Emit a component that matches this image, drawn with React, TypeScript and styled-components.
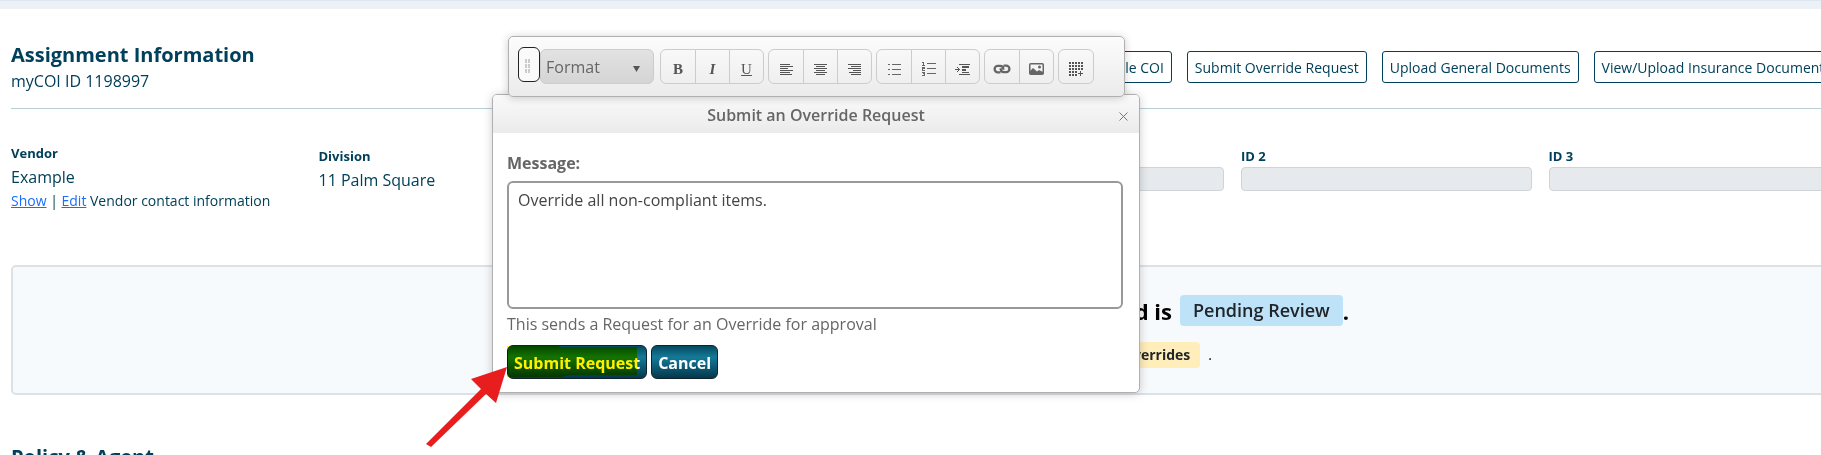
import React from "react";
import styled, { createGlobalStyle, css } from "styled-components";

const Global = createGlobalStyle`
  *, *::before, *::after { box-sizing: border-box; }
  body {
    margin: 0;
    background: #fff;
    color: #00405a;
    font: 16px/24px "Open Sans", "Noto Sans", sans-serif;
    overflow: hidden;
  }
  h1, h2, p { margin: 0; }
  button, textarea, select, input { font-family: inherit; }
`;

const Page = styled.div`
  position: relative;
  min-height: 100vh;
  overflow: hidden;
`;

const TopStrip = styled.div`
  height: 9px;
  background: #ebf1f7;
  border-top: 1px solid #dee6ef;
`;

const Main = styled.main`
  margin: 0 -18px 0 11px;
`;

const PageHeader = styled.header`
  display: flex;
  justify-content: space-between;
  align-items: flex-start;
  padding: 32px 0 15px;
  border-bottom: 1px solid #b9cfd4;
`;

const Title = styled.h1`
  font-size: 20px;
  line-height: 28px;
  font-weight: 700;
`;

const Subtitle = styled.p`
  font-size: 16px;
  line-height: 24px;
  font-weight: 500;
`;

const Actions = styled.div`
  display: flex;
  gap: 15px;
  padding-top: 10px;
`;

const ActionButton = styled.button`
  height: 32px;
  padding: 0 7px;
  border: 1px solid #00405a;
  border-radius: 3px;
  background: #fff;
  color: #00405a;
  font-size: 14px;
  white-space: nowrap;
`;

const Details = styled.section`
  display: grid;
  grid-template-columns: repeat(6, 1fr);
  gap: 17px;
  height: 156px;
  padding-top: 34px;
`;

const Field = styled.div<{ $lowered?: boolean }>`
  display: flex;
  flex-direction: column;
  padding-top: ${(p) => (p.$lowered ? 3 : 0)}px;
`;

const fieldLabel = css`
  font-size: 13px;
  line-height: 21px;
  font-weight: 700;
`;

const FieldName = styled.div`${fieldLabel}`;
const FieldLabel = styled.label`${fieldLabel}`;

const FieldValue = styled.div`
  font-size: 16px;
  line-height: 26px;
`;

const ContactLine = styled.div`
  font-size: 14px;
  line-height: 21px;
  a { color: #1a6dff; }
`;

const IdInput = styled.input`
  width: 100%;
  height: 24px;
  border: 1px solid #ced4da;
  border-radius: 4px;
  background: #e6eaed;
`;

const StatusPanel = styled.section`
  display: flex;
  flex-direction: column;
  align-items: center;
  gap: 16px;
  height: 130px;
  padding-top: 28px;
  border: 2px solid #dce1e5;
  border-radius: 5px;
  background: #f6fafd;
  color: #000;
`;

const StatusLine = styled.div<{ $width: number; $large?: boolean }>`
  display: flex;
  justify-content: flex-end;
  align-items: center;
  gap: 8px;
  width: ${(p) => p.$width}px;
  font-size: ${(p) => (p.$large ? 22 : 14)}px;
  font-weight: ${(p) => (p.$large ? 700 : 400)};
  white-space: nowrap;
`;

const Badge = styled.span<{ $tone: "blue" | "yellow" }>`
  padding: ${(p) => (p.$tone === "blue" ? "0 13px" : "0 10px")};
  border-radius: 4px;
  background: ${(p) => (p.$tone === "blue" ? "#bee2f8" : "#ffeeba")};
  color: #212529;
  font-size: ${(p) => (p.$tone === "blue" ? 18 : 14)}px;
  line-height: ${(p) => (p.$tone === "blue" ? 31 : 26)}px;
  font-weight: ${(p) => (p.$tone === "blue" ? 600 : 700)};
`;

const BadgeGroup = styled.span<{ $gap: number }>`
  display: flex;
  align-items: center;
  gap: ${(p) => p.$gap}px;
`;

const SectionTitle = styled.h2`
  margin-top: 48px;
  font-size: 20px;
  line-height: 28px;
  font-weight: 700;
`;

const Dialog = styled.div`
  position: absolute;
  top: 94px;
  left: 492px;
  width: 648px;
  border: 1px solid #b0b0b0;
  border-radius: 5px;
  background: #fff;
  box-shadow: 0 1px 10px rgba(0, 0, 0, 0.2);
  color: #666;
`;

const DialogHeader = styled.div`
  position: relative;
  height: 38px;
  border-radius: 4px 4px 0 0;
  background: linear-gradient(#fafafa, #ebebeb);
  text-align: center;
`;

const DialogTitle = styled.h2`
  font-size: 16px;
  line-height: 40px;
  font-weight: 600;
`;

const CloseButton = styled.button`
  position: absolute;
  top: 13px;
  right: 7px;
  display: flex;
  padding: 4px;
  border: 0;
  background: none;
`;

const DialogBody = styled.div`
  display: flex;
  flex-direction: column;
  padding: 16px 16px 13px 14px;
`;

const MessageLabel = styled.label`
  padding-bottom: 4px;
  font-size: 16px;
  line-height: 28px;
  font-weight: 700;
`;

const MessageInput = styled.textarea`
  height: 128px;
  padding: 5px 9px;
  border: 2px solid #999;
  border-radius: 6px;
  color: #444;
  font-size: 16px;
  line-height: 24px;
  resize: none;
`;

const Hint = styled.p`
  padding: 3px 0 9px;
`;

const DialogActions = styled.div`
  display: flex;
  gap: 4px;
`;

const DialogButton = styled.button`
  position: relative;
  height: 34px;
  padding: 1px 6px 0;
  border: 1px solid #11222c;
  border-radius: 6px;
  background: linear-gradient(#044a5e, #147a9a 35%, #04384c);
  color: #fff;
  font-size: 16px;
  font-weight: 700;
`;

const Marker = styled.span`
  position: absolute;
  inset: 0 9px 1px -1px;
  background: #fff000;
  mix-blend-mode: multiply;
  clip-path: polygon(0 0, 40% 0, 40% 1px, 100% 1px, 100% 94%, 48% 94%, 42% 100%, 0 100%);
`;

const Toolbar = styled.div`
  position: absolute;
  top: 36px;
  left: 508px;
  display: flex;
  align-items: flex-start;
  gap: 4px;
  width: 617px;
  height: 61px;
  padding: 12px 9px;
  border: 1px solid #b0b0b0;
  border-radius: 5px;
  background: linear-gradient(#fcfcfc, #ebebeb);
  box-shadow: 0 1px 8px rgba(0, 0, 0, 0.2);
`;

const FormatGroup = styled.div`
  display: flex;
  align-items: flex-start;
  padding-right: 2px;
`;

const Handle = styled.button`
  width: 22px;
  height: 35px;
  margin-top: -2px;
  padding: 8px 3px 0 0;
  border: 1px solid #222;
  border-radius: 6px;
  background: #fafafa;
`;

const SelectBox = styled.div`
  display: grid;
  align-items: center;
  width: 114px;
  height: 35px;
  border: 1px solid #ccc;
  border-radius: 6px;
  background: linear-gradient(#e2e2e2, #d5d5d5);
  > * { grid-area: 1 / 1; }
  svg { justify-self: end; margin: 5px 13px 0 0; pointer-events: none; }
`;

const FormatSelect = styled.select`
  appearance: none;
  width: 100%;
  height: 100%;
  padding: 0 0 0 5px;
  border: 0;
  background: none;
  color: #666;
  font-size: 16px;
`;

const ToolGroup = styled.div`
  display: flex;
  height: 35px;
  border: 1px solid #ccc;
  border-radius: 6px;
`;

const ToolButton = styled.button`
  display: flex;
  align-items: center;
  justify-content: center;
  width: 34px;
  padding: 5px 0 0;
  border: 0;
  border-left: 1px solid #ccc;
  background: none;
  color: #555;
  font: 700 15px/20px "Liberation Serif", serif;
  &:first-child { border-left: 0; }
`;

const Underlined = styled.u`
  font-weight: 400;
`;

const Pointer = styled.svg`
  position: absolute;
  top: 366px;
  left: 425px;
  pointer-events: none;
`;

const Lines = ({ rows }: { rows: [number, number][] }) => (
  <svg width="13" height="11" viewBox="0 0 13 11" fill="#555" shapeRendering="crispEdges">
    {rows.map(([x, w], i) => <rect key={i} x={x} y={i * 2} width={w} height="1" />)}
  </svg>
);

const tools: { label: string; icon: React.ReactNode }[][] = [
  [
    { label: "Bold", icon: "B" },
    { label: "Italic", icon: <i>I</i> },
    { label: "Underline", icon: <Underlined>U</Underlined> },
  ],
  [
    { label: "Align left", icon: <Lines rows={[[0, 10], [0, 13], [0, 8], [0, 13], [0, 10], [0, 12]]} /> },
    { label: "Align center", icon: <Lines rows={[[0, 13], [2, 9], [0, 13], [2, 9], [0, 13], [2, 9]]} /> },
    { label: "Align right", icon: <Lines rows={[[0, 13], [3, 10], [0, 13], [5, 8], [1, 12], [3, 10]]} /> },
  ],
  [
    {
      label: "Bulleted list",
      icon: (
        <svg width="13" height="11" viewBox="0 0 13 11" fill="#666" shapeRendering="crispEdges">
          {[0, 5, 10].map((y) => <g key={y}><rect x="0" y={y} width="2" height="1" /><rect x="4" y={y} width="9" height="1" /></g>)}
        </svg>
      ),
    },
    {
      label: "Numbered list",
      icon: (
        <svg width="14" height="14" viewBox="0 0 14 14" fill="#666" shapeRendering="crispEdges">
          <path d="M5 1h9v1H5zM5 6h9v1H5zM5 11h9v1H5z" />
          <path d="M1 0h1v3h1v1H0V3h1V1H0V0zM0 5h3v2H1v1h2v1H0V6h2H0zM0 10h3v4H0v-1h2v-1H1v-1H0z" />
        </svg>
      ),
    },
    {
      label: "Indent",
      icon: (
        <svg width="15" height="11" viewBox="0 0 15 11" fill="#555" shapeRendering="crispEdges">
          <path d="M4 0h11v1H4zM7 2h7v2H7zM7 5h4v2H7zM7 8h7v1H7zM4 10h11v1H4z" />
          <path d="M0 5h5v1H0zM3 4h1v3H3zM2 3h1v1H2zM2 7h1v1H2z" />
        </svg>
      ),
    },
  ],
  [
    {
      label: "Link",
      icon: (
        <svg width="18" height="10" viewBox="0 0 18 10" fill="none" stroke="#666" strokeWidth="2.3">
          <path d="M7.500 8.300H4.800a3.200 3.200 0 0 1 0-6.400h2.400c2.200 0 3.200 1.300 3.200 3.800M10.500 1.700h2.700a3.200 3.200 0 0 1 0 6.400h-2.400c-2.200 0-3.200-1.300-3.200-3.800" />
        </svg>
      ),
    },
    {
      label: "Image",
      icon: (
        <svg width="15" height="12" viewBox="0 0 15 12">
          <rect x=".75" y=".75" width="13.500" height="10.500" rx="1" fill="#f4f4f4" stroke="#666" strokeWidth="1.500" />
          <path d="M1 11V8l3-3 4 3.500 2-1.500 4 2v2z" fill="#666" />
          <circle cx="10.500" cy="4" r="1.500" fill="#666" />
        </svg>
      ),
    },
  ],
  [
    {
      label: "Table",
      icon: (
        <svg width="14" height="14" viewBox="0 0 14 14" fill="#555" shapeRendering="crispEdges">
          {[0, 3, 6, 9, 12].flatMap((y) => [0, 3, 6, 9, 12].filter((x) => x < 9 || y < 9).map((x) => <rect key={`${x}-${y}`} x={x} y={y} width="2" height="2" />))}
          <path d="M9 11h5v1H9zM11 9h1v5h-1z" />
        </svg>
      ),
    },
  ],
];

export default function App() {
  return (
    <Page>
      <Global />
      <TopStrip />
      <Main>
        <PageHeader>
          <div>
            <Title>Assignment Information</Title>
            <Subtitle>myCOI ID 1198997</Subtitle>
          </div>
          <Actions>
            <ActionButton>View Sample COI</ActionButton>
            <ActionButton>Submit Override Request</ActionButton>
            <ActionButton>Upload General Documents</ActionButton>
            <ActionButton>View/Upload Insurance Documents</ActionButton>
          </Actions>
        </PageHeader>
        <Details>
          <Field>
            <FieldName>Vendor</FieldName>
            <FieldValue>Example</FieldValue>
            <ContactLine><a href="#show">Show</a> | <a href="#edit">Edit</a> Vendor contact information</ContactLine>
          </Field>
          <Field $lowered>
            <FieldName>Division</FieldName>
            <FieldValue>11 Palm Square</FieldValue>
          </Field>
          <Field />
          {["ID 1", "ID 2", "ID 3"].map((name) => (
            <Field key={name} $lowered>
              <FieldLabel htmlFor={name}>{name}</FieldLabel>
              <IdInput id={name} disabled />
            </Field>
          ))}
        </Details>
        <StatusPanel>
          <StatusLine $width={848} $large>
            <span>This record is</span>
            <BadgeGroup $gap={0}><Badge $tone="blue">Pending Review</Badge>.</BadgeGroup>
          </StatusLine>
          <StatusLine $width={574}>
            <BadgeGroup $gap={8}><Badge $tone="yellow">Pending Overrides</Badge>.</BadgeGroup>
          </StatusLine>
        </StatusPanel>
        <SectionTitle>Policy &amp; Agent</SectionTitle>
      </Main>

      <Dialog role="dialog" aria-labelledby="dialog-title">
        <DialogHeader>
          <DialogTitle id="dialog-title">Submit an Override Request</DialogTitle>
          <CloseButton aria-label="Close">
            <svg width="9" height="9" viewBox="0 0 9 9" stroke="#777"><path d="M.5.5l8 8M8.500.5l-8 8" /></svg>
          </CloseButton>
        </DialogHeader>
        <DialogBody>
          <MessageLabel htmlFor="message">Message:</MessageLabel>
          <MessageInput id="message" defaultValue="Override all non-compliant items." />
          <Hint>This sends a Request for an Override for approval</Hint>
          <DialogActions>
            <DialogButton>Submit Request<Marker /></DialogButton>
            <DialogButton>Cancel</DialogButton>
          </DialogActions>
        </DialogBody>
      </Dialog>

      <Toolbar role="toolbar" aria-label="Formatting">
        <FormatGroup>
          <Handle aria-label="Move toolbar">
            <svg width="6" height="15" viewBox="0 0 6 15" fill="#ccc">
              {[0, 5, 10].map((y) => <g key={y}><rect y={y} width="2" height="4" /><rect x="3" y={y} width="2" height="4" /></g>)}
            </svg>
          </Handle>
          <SelectBox>
            <FormatSelect aria-label="Format"><option>Format</option></FormatSelect>
            <svg width="7" height="6" viewBox="0 0 7 6" fill="#555"><path d="M0 0h7L3.500 6z" /></svg>
          </SelectBox>
        </FormatGroup>
        {tools.map((group, i) => (
          <ToolGroup key={i}>
            {group.map((tool) => <ToolButton key={tool.label} aria-label={tool.label}>{tool.icon}</ToolButton>)}
          </ToolGroup>
        ))}
      </Toolbar>

      <Pointer width="84" height="84" viewBox="0 0 84 84" fill="#e81e1e" aria-hidden="true">
        <path d="M82 1L46 13l10 10L1 78l5 3L61 28l10 9z" />
      </Pointer>
    </Page>
  );
}
